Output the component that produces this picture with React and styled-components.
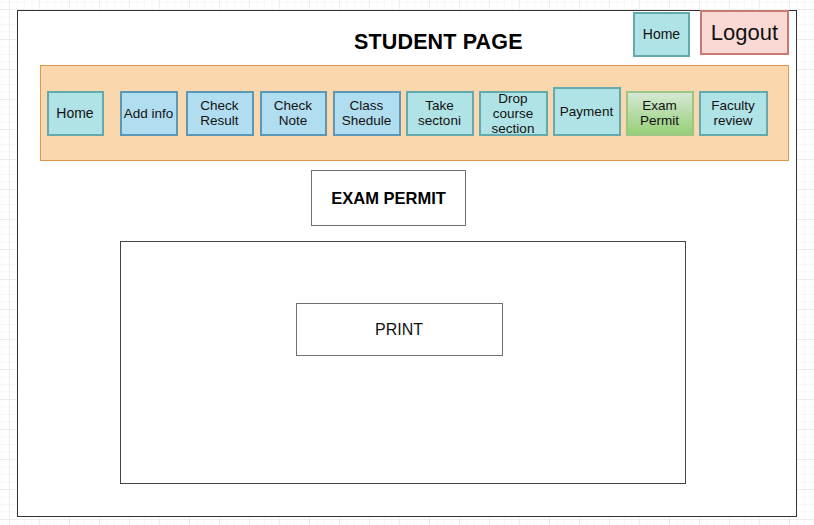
import React from "react";
import styled, { createGlobalStyle, css } from "styled-components";

const Global = createGlobalStyle`
  html, body { margin: 0; padding: 0; }
  body {
    width: 814px;
    height: 525px;
    overflow: hidden;
    font-family: "Liberation Sans", Arial, Helvetica, sans-serif;
    color: #000;
    background-color: #ffffff;
    background-image:
      linear-gradient(to right, #ededed 1px, transparent 1px),
      linear-gradient(to bottom, #ededed 1px, transparent 1px),
      linear-gradient(to right, #f7f7f7 1px, transparent 1px),
      linear-gradient(to bottom, #f7f7f7 1px, transparent 1px);
    background-size: 30px 30px, 30px 30px, 7.5px 7.5px, 7.5px 7.5px;
    background-position: 9px 9px, 9px 9px, 9px 9px, 9px 9px;
  }
`;

const Frame = styled.div`
  box-sizing: border-box;
  margin: 10px 0 0 17px;
  width: 780px;
  height: 507px;
  background: #fff;
  border: 1.5px solid #333;
  display: flex;
  flex-direction: column;
`;

const Header = styled.div`
  display: flex;
  align-items: flex-start;
  height: 54px;
  padding: 0 7px 0 336px;
`;

const Title = styled.h1`
  margin: 18px 0 0 0;
  font-size: 21.5px;
  font-weight: bold;
  line-height: 26px;
  letter-spacing: 0.15px;
`;

const TopButtons = styled.div`
  margin-left: auto;
  display: flex;
  align-items: flex-start;
  gap: 10px;
`;

const palette = {
  teal: css`
    background: #b0e3e6;
    border-color: #63a9ad;
  `,
  blue: css`
    background: #b1ddf0;
    border-color: #5b98b6;
  `,
  green: css`
    background: linear-gradient(to bottom, #d5e8d4, #97d077);
    border-color: #9dc585;
  `,
  red: css`
    background: #fad9d5;
    border-color: #c97a70;
  `,
};

const Box = styled.div`
  box-sizing: border-box;
  display: flex;
  align-items: center;
  justify-content: center;
  text-align: center;
  border: 2px solid;
  ${(p) => palette[p.$tone]}
  width: ${(p) => p.$w}px;
  height: ${(p) => p.$h}px;
  margin-top: ${(p) => p.$mt || 0}px;
  margin-left: ${(p) => p.$ml || 0}px;
  font-size: ${(p) => p.$fs || 13.5}px;
  line-height: ${(p) => p.$lh || 15}px;
  color: #111;
`;

const Nav = styled.nav`
  box-sizing: border-box;
  margin-left: 22px;
  width: 749px;
  height: 96px;
  background: #fad7ac;
  border: 1.5px solid #dd9a4a;
  display: flex;
  align-items: flex-end;
  padding: 0 0 24.5px 5.5px;
`;

const Body = styled.div`
  display: flex;
  flex-direction: column;
`;

const SectionTitle = styled.div`
  box-sizing: border-box;
  margin: 9px 0 0 293px;
  width: 155px;
  height: 56px;
  border: 1.5px solid #707070;
  display: flex;
  align-items: center;
  justify-content: center;
  font-size: 16.5px;
  font-weight: bold;
`;

const Panel = styled.div`
  box-sizing: border-box;
  margin: 15px 0 0 101.5px;
  width: 566px;
  height: 243px;
  border: 1.5px solid #444;
  padding: 61px 0 0 175px;
`;

const PrintButton = styled.button`
  box-sizing: border-box;
  width: 207px;
  height: 53px;
  background: #fff;
  border: 1.5px solid #707070;
  font-family: inherit;
  font-size: 16px;
  color: #111;
  padding: 0;
  cursor: pointer;
`;

const navItems = [
  { label: "Home", tone: "teal", w: 57, ml: 0 },
  { label: "Add info", tone: "blue", w: 58, ml: 16 },
  { label: "Check\nResult", tone: "blue", w: 68, ml: 8 },
  { label: "Check\nNote", tone: "blue", w: 67, ml: 6 },
  { label: "Class\nShedule", tone: "blue", w: 68, ml: 6 },
  { label: "Take\nsectoni", tone: "teal", w: 68, ml: 5 },
  { label: "Drop\ncourse\nsection", tone: "teal", w: 69, ml: 5 },
  { label: "Payment", tone: "teal", w: 68, ml: 5, h: 49 },
  { label: "Exam\nPermit", tone: "green", w: 68, ml: 5 },
  { label: "Faculty\nreview", tone: "teal", w: 69, ml: 5 },
];

const Label = ({ text }) =>
  text.split("\n").map((line, i) => (
    <React.Fragment key={i}>
      {i > 0 && <br />}
      {line}
    </React.Fragment>
  ));

export default function App() {
  return (
    <>
      <Global />
      <Frame>
        <Header>
          <Title>STUDENT PAGE</Title>
          <TopButtons>
            <Box $tone="teal" $w={57} $h={45} $mt={1} $fs={14}>
              Home
            </Box>
            <Box $tone="red" $w={89} $h={45} $mt={-1} $fs={22} $lh={26}>
              Logout
            </Box>
          </TopButtons>
        </Header>
        <Nav>
          {navItems.map((it) => (
            <Box
              key={it.label}
              $tone={it.tone}
              $w={it.w}
              $h={it.h || 45}
              $ml={it.ml}
              $fs={it.label === "Home" ? 14 : 13.5}
            >
              <span>
                <Label text={it.label} />
              </span>
            </Box>
          ))}
        </Nav>
        <Body>
          <SectionTitle>EXAM PERMIT</SectionTitle>
          <Panel>
            <PrintButton>PRINT</PrintButton>
          </Panel>
        </Body>
      </Frame>
    </>
  );
}
